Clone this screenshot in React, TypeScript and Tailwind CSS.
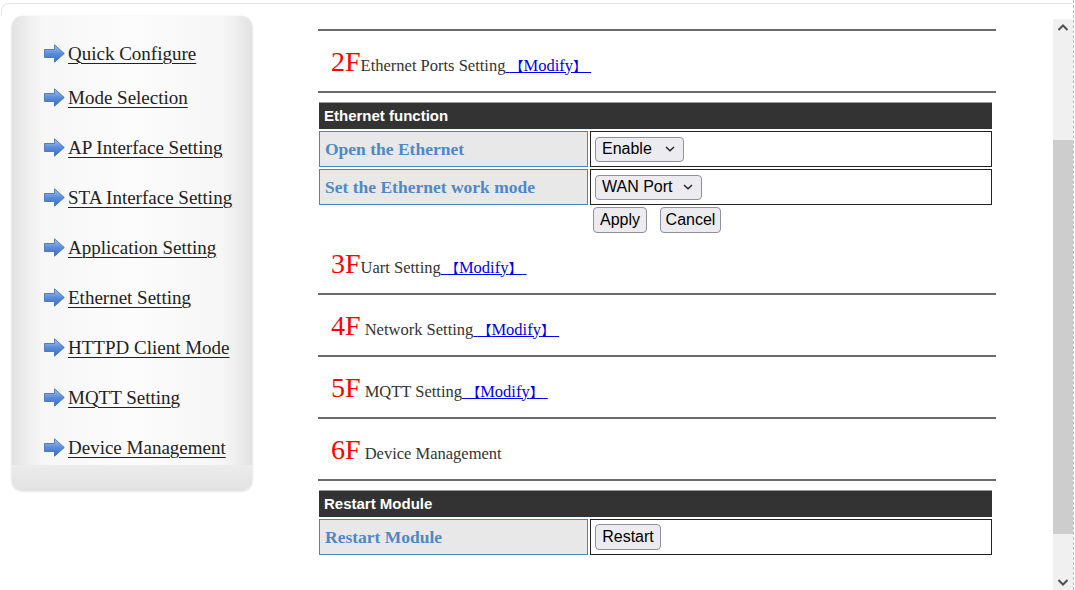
import React from 'react';

const NAV = [
  'Quick Configure',
  'Mode Selection',
  'AP Interface Setting',
  'STA Interface Setting',
  'Application Setting',
  'Ethernet Setting',
  'HTTPD Client Mode',
  'MQTT Setting',
  'Device Management',
];

const SERIF = { fontFamily: '"Liberation Serif", "Noto Sans CJK SC", serif' };
const SANS = { fontFamily: '"Liberation Sans", Arial, sans-serif' };

function NavArrow() {
  return (
    <svg width="21" height="19" viewBox="0 0 21 19" className="shrink-0">
      <defs>
        <linearGradient id="arr" x1="0" y1="0" x2="0" y2="1">
          <stop offset="0" stopColor="#a9c4f0" />
          <stop offset="0.5" stopColor="#5b8ddc" />
          <stop offset="1" stopColor="#3a6cc0" />
        </linearGradient>
      </defs>
      <path d="M0.5 5.5 H10.5 V0.8 L20.3 9.5 L10.5 18.2 V13.5 H0.5 Z" fill="url(#arr)" stroke="#3d68b0" strokeWidth="0.8" />
    </svg>
  );
}

function Chevron() {
  return (
    <svg width="10" height="6" viewBox="0 0 10 6" className="shrink-0">
      <path d="M1 1 L5 4.8 L9 1" fill="none" stroke="#222" strokeWidth="1.4" />
    </svg>
  );
}

function Select({ value, w }: { value: string; w: string }) {
  return (
    <div className={`${w} h-[25px] flex items-center justify-between pl-[6px] pr-[8px] rounded-[4px] border border-[#8f8f9d] bg-[#ececf0] text-[16px] text-black`} style={SANS}>
      <span>{value}</span>
      <Chevron />
    </div>
  );
}

function Btn({ label, w }: { label: string; w: string }) {
  return (
    <button className={`${w} h-[26px] rounded-[4px] border border-[#8f8f9d] bg-[#ececf0] text-[16px] text-black leading-none`} style={SANS}>
      {label}
    </button>
  );
}

function Floor({ num, title, spaced, modify }: { num: string; title: string; spaced?: boolean; modify?: boolean }) {
  return (
    <div className="h-[60px] flex items-center pl-[13px] pt-[4px]">
      <div className="flex items-baseline" style={SERIF}>
        <span className="text-[28px] text-[#ff0000] leading-none">{num}</span>
        <span className="text-[16.5px] text-[#333] whitespace-pre">{spaced ? ' ' : ''}{title}</span>
        {modify && (
          <a className="text-[16.5px] text-[#0000ee] underline whitespace-pre" href="#">
            {' '}<span className="text-[14px]">【</span>Modify<span className="text-[14px]">】</span>{' '}
          </a>
        )}
      </div>
    </div>
  );
}

function Rule() {
  return <div className="h-[2px] bg-[#6b6b6b]" />;
}

function TableHead({ title }: { title: string }) {
  return (
    <div className="h-[27px] ml-[1px] mr-[4px] bg-[#333333] border-t border-[#9a9a9a] flex items-center pl-[5px] text-white font-bold text-[15px]" style={SANS}>
      {title}
    </div>
  );
}

function Row({ label, children }: { label: string; children: React.ReactNode }) {
  return (
    <div className="flex gap-[2px] h-[36px] ml-[1px] mr-[4px]">
      <div className="w-[269px] bg-[#e8e8e8] border border-[#4b84c2] flex items-center pl-[5px] text-[17.5px] font-bold text-[#4f88c6]" style={SERIF}>
        {label}
      </div>
      <div className="flex-1 border-[1.5px] border-[#222] flex items-center pl-[4px]">{children}</div>
    </div>
  );
}

export default function App() {
  return (
    <div className="w-[1075px] h-[590px] overflow-hidden bg-white flex">
      <div className="w-[1053px] flex flex-col">
        {/* frame top edge */}
        <div className="h-[16px] pt-[3px] pl-[1px]">
          <div className="h-full border-t border-l border-[#e4e4e4] rounded-tl-[8px]" />
        </div>

        <div className="flex items-start">
          {/* Sidebar */}
          <div
            className="ml-[12px] w-[240px] h-[474px] rounded-[10px] shadow-[0_1px_3px_rgba(0,0,0,0.18)] flex flex-col overflow-hidden"
            style={{ background: 'linear-gradient(to right, #e2e2e2 0%, #f6f6f6 12%, #fcfcfc 50%, #f6f6f6 88%, #e2e2e2 100%)' }}
          >
            <div className="flex-1 flex flex-col pl-[32px]">
              {NAV.map((item, i) => (
                <div
                  key={item}
                  className={`h-[24px] flex items-center gap-[3px] ${i === 0 ? 'mt-[25px]' : i === 1 ? 'mt-[20px]' : 'mt-[26px]'}`}
                >
                  <NavArrow />
                  <a href="#" className="text-[19px] text-[#222] underline decoration-[1px] underline-offset-[3px] leading-none whitespace-nowrap" style={SERIF}>
                    {item}
                  </a>
                </div>
              ))}
            </div>
            <div className="h-[25px] bg-gradient-to-b from-[#ececec] to-[#e2e2e2]" />
          </div>

          {/* Main content */}
          <div className="ml-[66px] w-[678px] flex flex-col mt-[13px]">
            <Rule />
            <Floor num="2F" title="Ethernet Ports Setting" modify />
            <Rule />
            <div className="h-[9px]" />
            <TableHead title="Ethernet function" />
            <div className="h-[2px]" />
            <Row label="Open the Ethernet">
              <Select value="Enable" w="w-[89px]" />
            </Row>
            <div className="h-[2px]" />
            <Row label="Set the Ethernet work mode">
              <Select value="WAN Port" w="w-[107px]" />
            </Row>
            <div className="flex gap-[13px] pl-[275px] mt-[2px]">
              <Btn label="Apply" w="w-[54px]" />
              <Btn label="Cancel" w="w-[61px]" />
            </div>
            <Floor num="3F" title="Uart Setting" modify />
            <Rule />
            <Floor num="4F" title="Network Setting" spaced modify />
            <Rule />
            <Floor num="5F" title="MQTT Setting" spaced modify />
            <Rule />
            <Floor num="6F" title="Device Management" spaced />
            <Rule />
            <div className="h-[9px]" />
            <TableHead title="Restart Module" />
            <div className="h-[2px]" />
            <Row label="Restart Module">
              <Btn label="Restart" w="w-[66px]" />
            </Row>
          </div>
        </div>
      </div>

      {/* Scrollbar */}
      <div className="w-[20px] flex flex-col">
        <div className="h-[16px] border-t border-[#e4e4e4] mt-[3px]" />
        <div className="flex-1 bg-[#f0f0f0] flex flex-col">
          <div className="h-[17px] flex items-center justify-center">
            <svg width="10" height="7" viewBox="0 0 10 7">
              <path d="M0.5 6 L5 1.5 L9.5 6" fill="none" stroke="#505050" strokeWidth="2" />
            </svg>
          </div>
          <div className="h-[104px]" />
          <div className="h-[394px] bg-[#cdcdcd]" />
          <div className="flex-1 flex items-end justify-center pb-[4px]">
            <svg width="10" height="7" viewBox="0 0 10 7">
              <path d="M0.5 1 L5 5.5 L9.5 1" fill="none" stroke="#505050" strokeWidth="2" />
            </svg>
          </div>
        </div>
      </div>
      <div className="w-[2px] border-l border-dashed border-[#bbb]" />
    </div>
  );
}
